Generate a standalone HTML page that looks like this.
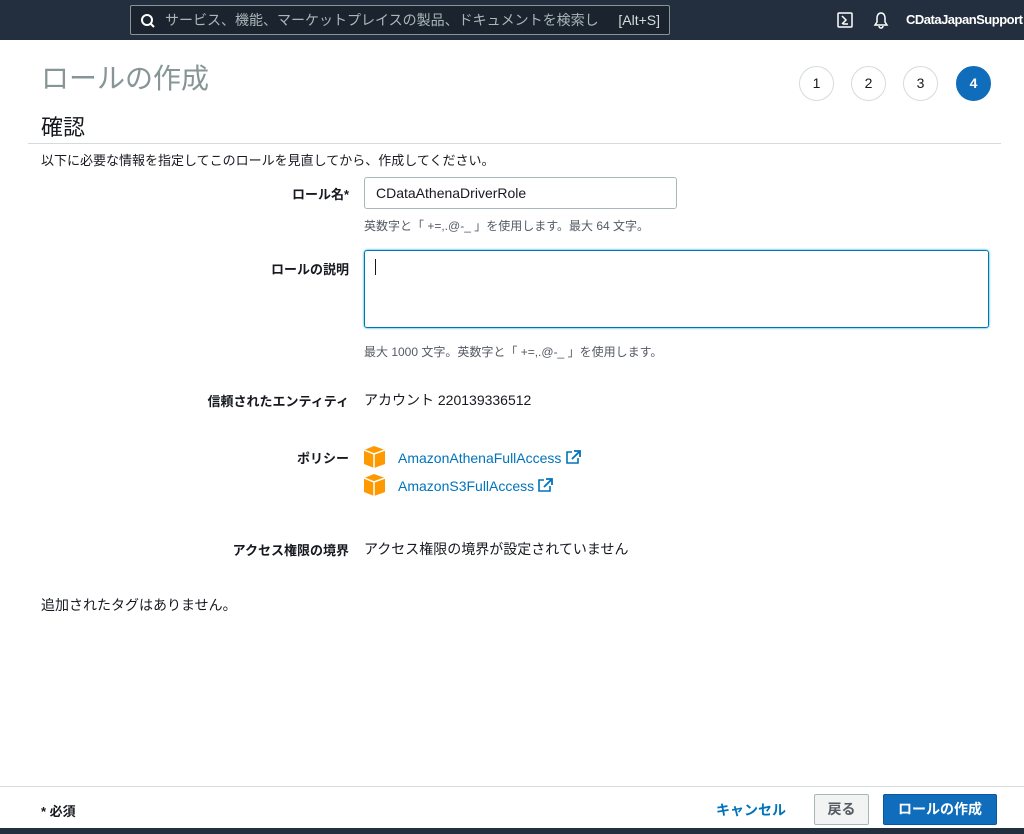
<!DOCTYPE html>
<html><head><meta charset="utf-8"><style>
*{box-sizing:border-box;margin:0;padding:0}
body{width:1024px;height:834px;position:relative;overflow:hidden;background:#fff;font-family:"Liberation Sans","Noto Sans CJK JP",sans-serif;color:#16191f;font-size:14px}
.a{position:absolute;white-space:nowrap}
.nav{left:0;top:0;width:1024px;height:40px;background:#232f3e}
.search{left:130px;top:5px;width:540px;height:30px;border:1px solid #879596;border-radius:2px;background:#1a232e;color:#aab7b8;font-size:14px;line-height:28px;padding-left:34px}
.circle{width:35px;height:35px;border-radius:50%;border:1px solid #d5dbdb;text-align:center;line-height:33px;font-size:14px;top:66px;color:#16191f}
.lbl{font-weight:bold;font-size:13px;text-align:right;width:300px;left:49px}
.hint{font-size:12px;color:#545b64;left:364px}
.link{color:#0073bb;font-size:14px}
</style></head><body>
<div class="a nav"></div>
<div class="a search">サービス、機能、マーケットプレイスの製品、ドキュメントを検索し<span style="position:absolute;right:9px;color:#d5dbdb">[Alt+S]</span></div>
<svg class="a" style="left:140px;top:13px" width="16" height="16" viewBox="0 0 16 16"><circle cx="7" cy="7" r="5" fill="none" stroke="#fff" stroke-width="2"/><line x1="10.5" y1="10.5" x2="14" y2="14" stroke="#fff" stroke-width="2"/></svg>
<svg class="a" style="left:837px;top:12px" width="16" height="16" viewBox="0 0 16 16"><rect x="1" y="1" width="14" height="14" rx="1" fill="none" stroke="#fff" stroke-width="1.5"/><path d="M5 4l4 4-4 4" fill="none" stroke="#fff" stroke-width="1.5"/><line x1="6" y1="12" x2="11" y2="12" stroke="#fff" stroke-width="1.5"/></svg>
<svg class="a" style="left:873px;top:11px" width="16" height="18" viewBox="0 0 16 18"><path d="M8 2c-3 0-4 3-4 5v4l-2 3h12l-2-3V7c0-2-1-5-4-5z" fill="none" stroke="#fff" stroke-width="1.5"/><path d="M6 15a2 2 0 004 0" fill="none" stroke="#fff" stroke-width="1.5"/></svg>
<div class="a" style="left:906px;top:12px;color:#fff;font-size:13px;font-weight:bold;letter-spacing:-0.5px">CDataJapanSupport</div>

<div class="a" style="left:41px;top:57px;font-size:28px;color:#879596">ロールの作成</div>
<div class="a circle" style="left:799px">1</div>
<div class="a circle" style="left:851px">2</div>
<div class="a circle" style="left:903px">3</div>
<div class="a circle" style="left:956px;background:#0f6dbb;border-color:#0f6dbb;color:#fff;font-weight:bold">4</div>
<div class="a" style="left:41px;top:110px;font-size:22px">確認</div>
<div class="a" style="left:28px;top:143px;width:973px;height:1px;background:#d5dbdb"></div>
<div class="a" style="left:41px;top:150px;font-size:13px">以下に必要な情報を指定してこのロールを見直してから、作成してください。</div>

<div class="a lbl" style="top:184px">ロール名*</div>
<div class="a" style="left:364px;top:177px;width:313px;height:32px;border:1px solid #aab7b8;border-radius:3px;padding-left:11px;line-height:30px;font-size:14px">CDataAthenaDriverRole</div>
<div class="a hint" style="top:217px">英数字と「 +=,.@-_ 」を使用します。最大 64 文字。</div>

<div class="a lbl" style="top:259px">ロールの説明</div>
<div class="a" style="left:364px;top:250px;width:625px;height:78px;border:1px solid #0073bb;border-radius:3px;box-shadow:0 0 2px #00a1c9"></div>
<div class="a" style="left:375px;top:259px;width:1px;height:16px;background:#16191f"></div>
<div class="a hint" style="top:343px">最大 1000 文字。英数字と「 +=,.@-_ 」を使用します。</div>

<div class="a lbl" style="top:391px">信頼されたエンティティ</div>
<div class="a" style="left:364px;top:390px">アカウント 220139336512</div>

<div class="a lbl" style="top:448px">ポリシー</div>
<svg class="a" style="left:364px;top:446px" width="21" height="22" viewBox="0 0 21 22"><path d="M0 4l10-4 11 4v14l-11 4-10-4z" fill="#f90"/><path d="M0 4l10 4 11-4M10 8v14" stroke="#fff" stroke-width="1.5" fill="none"/></svg>
<div class="a link" style="left:398px;top:450px">AmazonAthenaFullAccess</div>
<svg class="a" style="left:566px;top:450px" width="15" height="14" viewBox="0 0 15 14"><path d="M6 2H1v11h11V8" fill="none" stroke="#0073bb" stroke-width="1.6"/><path d="M8 1h6v6M14 1L6 9" fill="none" stroke="#0073bb" stroke-width="1.8"/></svg>
<svg class="a" style="left:364px;top:474px" width="21" height="22" viewBox="0 0 21 22"><path d="M0 4l10-4 11 4v14l-11 4-10-4z" fill="#f90"/><path d="M0 4l10 4 11-4M10 8v14" stroke="#fff" stroke-width="1.5" fill="none"/></svg>
<div class="a link" style="left:398px;top:478px">AmazonS3FullAccess</div>
<svg class="a" style="left:538px;top:478px" width="15" height="14" viewBox="0 0 15 14"><path d="M6 2H1v11h11V8" fill="none" stroke="#0073bb" stroke-width="1.6"/><path d="M8 1h6v6M14 1L6 9" fill="none" stroke="#0073bb" stroke-width="1.8"/></svg>

<div class="a lbl" style="top:540px">アクセス権限の境界</div>
<div class="a" style="left:364px;top:539px">アクセス権限の境界が設定されていません</div>
<div class="a" style="left:41px;top:595px">追加されたタグはありません。</div>

<div class="a" style="left:0;top:786px;width:1024px;height:1px;background:#d5dbdb"></div>
<div class="a" style="left:41px;top:801px;font-size:13px;font-weight:bold">* 必須</div>
<div class="a" style="left:716px;top:800px;color:#0073bb;font-weight:bold;font-size:14px">キャンセル</div>
<div class="a" style="left:814px;top:794px;width:55px;height:31px;border:1px solid #aab7b8;border-radius:2px;background:#f2f3f3;text-align:center;line-height:29px;font-weight:bold;color:#545b64">戻る</div>
<div class="a" style="left:883px;top:794px;width:114px;height:31px;border:1px solid #0a57a0;border-radius:2px;background:#0f6dbb;text-align:center;line-height:29px;font-weight:bold;color:#fff">ロールの作成</div>
<div class="a" style="left:0;top:828px;width:1024px;height:6px;background:#232f3e"></div>
</body></html>
